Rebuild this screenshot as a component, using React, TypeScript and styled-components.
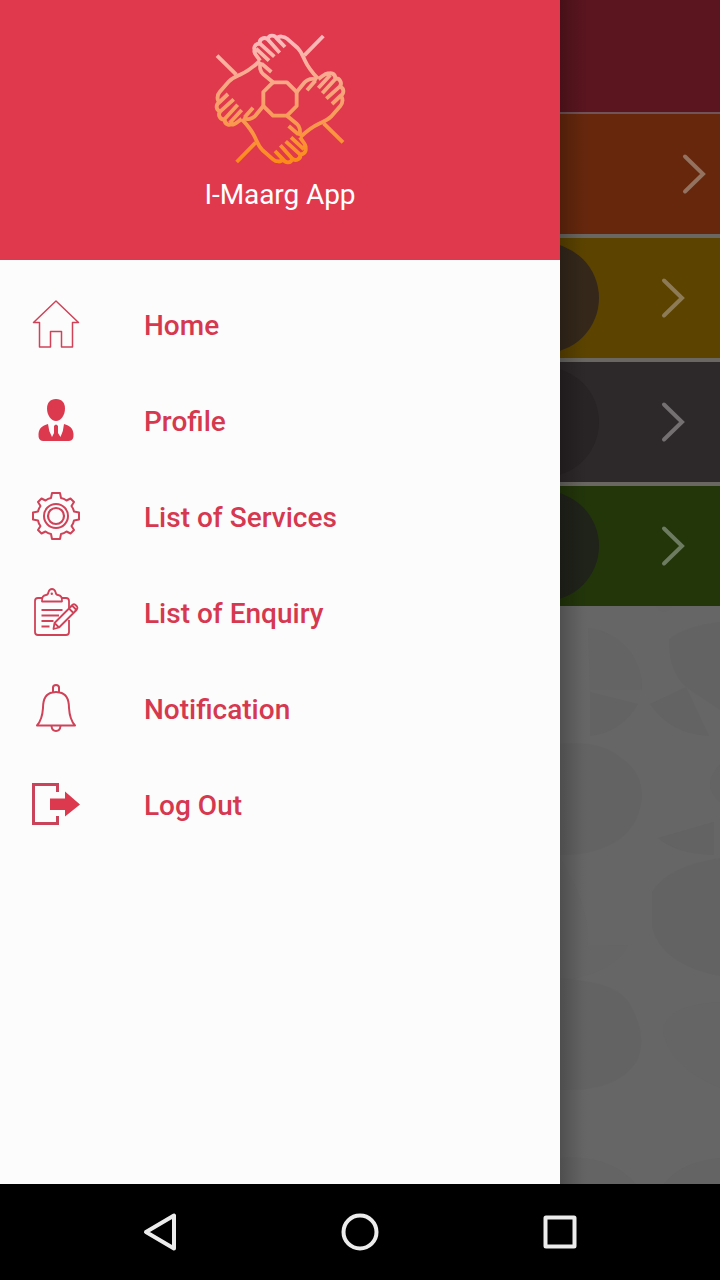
import React from "react";
import styled, { createGlobalStyle } from "styled-components";

const GlobalStyle = createGlobalStyle`
  * { box-sizing: border-box; }
  body { margin: 0; background: #000; font-family: Roboto, "Liberation Sans", sans-serif; }
`;

const Screen = styled.div`
  width: 720px;
  height: 1280px;
  display: flex;
  flex-direction: column;
  overflow: hidden;
`;

const Content = styled.div`
  height: 1184px;
  display: flex;
`;

const Drawer = styled.aside`
  width: 560px;
  background: #fcfcfc;
  display: flex;
  flex-direction: column;
`;

const DrawerHeader = styled.header`
  height: 260px;
  padding-top: 30px;
  background: #e0394e;
  display: flex;
  flex-direction: column;
  align-items: center;
`;

const AppName = styled.h1`
  margin: 7px 0 0;
  font-size: 28px;
  font-weight: 400;
  line-height: 40px;
  letter-spacing: -0.1px;
  color: #fff;
`;

const Menu = styled.nav`
  padding-top: 16px;
  display: flex;
  flex-direction: column;
`;

const MenuItem = styled.a`
  height: 96px;
  padding-left: 32px;
  display: flex;
  align-items: center;
  gap: 64px;
  color: #d6384f;
  font-size: 28px;
  font-weight: 500;
`;

const MenuIcon = styled.svg<{ $weight?: number }>`
  width: 48px;
  height: 48px;
  flex: none;
  overflow: visible;
  fill: none;
  stroke: #cf4258;
  stroke-width: ${(p) => p.$weight ?? 1.8};
  stroke-linejoin: round;
`;

const MenuLabel = styled.span`
  line-height: 36px;
  padding-top: 4px;
`;

const Behind = styled.main`
  position: relative;
  width: 160px;
  display: flex;
  flex-direction: column;
  background: #666;
  overflow: hidden;
`;

const DrawerShadow = styled.div`
  position: absolute;
  inset: 0 auto 0 0;
  width: 28px;
  background: linear-gradient(to right, rgba(0, 0, 0, 0.22), rgba(0, 0, 0, 0.1) 45%, rgba(0, 0, 0, 0.02) 80%, transparent);
`;

const TopBar = styled.div`
  height: 114px;
  flex: none;
  background: #5a151f;
  border-bottom: 2px solid #70545a;
`;

const Card = styled.div<{ $color: string; $last?: boolean; $inset: number }>`
  height: ${(p) => (p.$last ? 120 : 124)}px;
  flex: none;
  display: flex;
  align-items: center;
  justify-content: space-between;
  padding-right: ${(p) => p.$inset}px;
  background: ${(p) => p.$color};
  border-bottom: ${(p) => (p.$last ? "none" : "4px solid #6a6762")};
`;

const Disc = styled.div<{ $color: string }>`
  width: 110px;
  height: 110px;
  margin-left: -71px;
  border-radius: 50%;
  background: ${(p) => p.$color};
`;

const Arrow = styled.svg<{ $color: string }>`
  width: 24px;
  height: 42px;
  fill: none;
  stroke: ${(p) => p.$color};
  stroke-width: 4;
  stroke-linecap: round;
`;

const Pattern = styled.svg`
  width: 160px;
  height: 578px;
  display: block;
  fill: #636363;
`;

const NavBar = styled.footer`
  height: 96px;
  background: #000;
  display: flex;
  justify-content: center;
  gap: 152px;
  align-items: center;
`;

const NavIcon = styled.svg`
  width: 48px;
  height: 48px;
  fill: none;
  stroke: #ececec;
  stroke-width: 4;
  stroke-linejoin: round;
`;

const turns = [0, 90, 180, 270];

const HandsLogo = () => (
  <svg width="138" height="138" viewBox="33 30 414 414" fill="none">
    <defs>
      <linearGradient id="warm" gradientUnits="userSpaceOnUse" x1="240" y1="45" x2="240" y2="430">
        <stop offset="0" stopColor="#fbbcc0" />
        <stop offset="0.45" stopColor="#f8a47a" />
        <stop offset="1" stopColor="#fb8a17" />
      </linearGradient>
      <mask id="hands" maskUnits="userSpaceOnUse" x="30" y="30" width="420" height="420">
        <g stroke="#fff" strokeWidth="11.5" strokeLinecap="butt" strokeLinejoin="round">
          {turns.map((a) => (
            <g key={a} transform={`rotate(${a} 240 237)`}>
              <path d="M370 48 L313 106" />
              <path d="M231 56 C236 47 252 48 261 56 L293 84 C304 95 308 107 314 120 C323 140 337 158 354 176" />
              <path d="M255 81 L231 56 C224 44 207 43 203 58" />
              <path d="M239 98 L203 58 C194 49 174 57 180 74" />
              <path d="M223 110 L180 71 C163 70 158 86 168 99" />
              <path d="M207 122 L168 86 M163 92 C162 102 173 110 180 122" />
              <path d="M183 126 C176 140 181 155 190 163 L219 187 M185 131 L214 156" />
              <path d="M215 187 L261 187 L292 218" />
            </g>
          ))}
        </g>
      </mask>
    </defs>
    <rect x="33" y="30" width="414" height="414" fill="url(#warm)" mask="url(#hands)" />
  </svg>
);

const HomeIcon = () => (
  <MenuIcon viewBox="0 0 48 48" $weight={1.5}>
    <path d="M24 1 L1.500 22.500 H7.500 V47 H18.500 V31.500 H29.500 V47 H40.500 V22.500 H46.500 Z" />
  </MenuIcon>
);

const ProfileIcon = () => (
  <MenuIcon viewBox="0 0 48 48">
    <g fill="#dc394f" stroke="none">
      <path d="M24 3 C30 3 33 7 33 12.500 C33 19 29 25 24 25 C19 25 15 19 15 12.500 C15 7 18 3 24 3 Z" />
      <path d="M16 28 Q16.500 35 20 41 L22 37 L22 30 Q24 27 26 30 L26 37 L28.500 41 Q31.500 35 32 28 C38 30 41 32 41.500 38 Q42 45 37 45 H11 Q6 45 6.500 38 C7 32 10 30 16 28 Z" />
    </g>
  </MenuIcon>
);

const GearIcon = () => (
  <MenuIcon viewBox="0 0 48 48" $weight={2}>
    <path d="M20 1 H28 L29 6 Q32 6.500 34.500 8.500 L38.500 6.500 L42 10 L39.500 14 Q41.500 17 42 19.500 L47 20.500 V27.500 L42 28.500 Q41.500 31.500 39.500 34 L42 38 L38.500 41.500 L34.500 39.500 Q32 41.500 29 42 L28 47 H20 L19 42 Q16 41.500 13.500 39.500 L9.500 41.500 L6 38 L8.500 34 Q6.500 31.500 6 28.500 L1 27.500 V20.500 L6 19.500 Q6.500 17 8.500 14 L6 10 L9.500 6.500 L13.500 8.500 Q16 6.500 19 6 Z" />
    <circle cx="24" cy="24" r="12" />
    <circle cx="24" cy="24" r="8" strokeWidth="2.200" />
  </MenuIcon>
);

const EnquiryIcon = () => (
  <MenuIcon viewBox="0 0 48 48">
    <path d="M10 10 H6 Q3 10 3 13 V44 Q3 47 6 47 H34 Q37 47 37 44 V32 M37 20 V13 Q37 10 34 10 H30" />
    <path d="M10 13.500 Q9.500 7.500 14 7 Q16 7 16.500 4 Q17.500 1 20 1 Q22.500 1 23.500 4 Q24 7 26 7 Q30.500 7.500 30 13.500 Z" />
    <circle cx="19.800" cy="5.800" r="1.200" fill="#cf4258" stroke="none" />
    <path d="M9.500 22 H30.500 M9.500 27.500 H27 M9.500 33 H21.500 M9.500 38.500 H17.500" />
    <path d="M40 17.500 L44.500 22 L27 39.500 L21.500 41 L22.500 35 Z M37 20.500 L41.500 25 M22.500 35 L27 39.500" />
    <path d="M39 18.500 L41 16.500 Q42 15.500 43.500 17 L45 18.500 Q46 20 45 21 L43 23" />
  </MenuIcon>
);

const BellIcon = () => (
  <MenuIcon viewBox="0 0 48 48" $weight={2}>
    <path d="M5 41.500 C9 37 10.500 32 11 24 C11 15 14 9.500 20.500 8.500 Q24 7.500 27.500 8.500 C34 9.500 37 15 37 24 C37.500 32 39 37 43 41.500 Z" />
    <path d="M21 8.500 V3.500 Q21 1 24 1 Q27 1 27 3.500 V8.500 M19.500 42 Q20 47 24 47 Q28 47 28.500 42" />
  </MenuIcon>
);

const LogoutIcon = () => (
  <MenuIcon viewBox="0 0 48 48">
    <path d="M0 3 H27 V12 H24 V6 H3 V42 H24 V36 H27 V45 H0 Z" fill="#c9435a" stroke="none" />
    <path d="M18 18.500 H33 V11.500 L48 24.500 L33 36.500 V30 H18 Z" fill="#dc394f" stroke="none" />
  </MenuIcon>
);

const entries = [
  { label: "Home", Icon: HomeIcon },
  { label: "Profile", Icon: ProfileIcon },
  { label: "List of Services", Icon: GearIcon },
  { label: "List of Enquiry", Icon: EnquiryIcon },
  { label: "Notification", Icon: BellIcon },
  { label: "Log Out", Icon: LogoutIcon },
];

const cards = [
  { color: "#66270d", disc: "transparent", arrow: "#93725f", inset: 14 },
  { color: "#5c4300", disc: "#35281b", arrow: "#8d7b57", inset: 35 },
  { color: "#2d282a", disc: "#282325", arrow: "#747071", inset: 35 },
  { color: "#22360a", disc: "#20231a", arrow: "#6d7b60", inset: 35 },
];

export default function App() {
  return (
    <>
      <GlobalStyle />
      <Screen>
        <Content>
          <Drawer>
            <DrawerHeader>
              <HandsLogo />
              <AppName>I-Maarg App</AppName>
            </DrawerHeader>
            <Menu>
              {entries.map(({ label, Icon }) => (
                <MenuItem key={label}>
                  <Icon />
                  <MenuLabel>{label}</MenuLabel>
                </MenuItem>
              ))}
            </Menu>
          </Drawer>
          <Behind>
            <TopBar />
            {cards.map((c, i) => (
              <Card key={c.color} $color={c.color} $inset={c.inset} $last={i === cards.length - 1}>
                <Disc $color={c.disc} />
                <Arrow $color={c.arrow} viewBox="0 0 24 42">
                  <path d="M3 3.500 L21 21 L3 38.500" />
                </Arrow>
              </Card>
            ))}
            <Pattern viewBox="0 0 160 578">
              <path d="M40 0 H112 Q104 12 96 0 Z" opacity="0.5" />
              <path d="M28 22 A60 60 0 0 1 82 84 L30 84 Z" opacity="0.55" />
              <path d="M30 86 L78 98 Q62 126 30 130 Z" />
              <path d="M160 16 Q126 20 109 33 Q108 66 127 82 L160 104 Z" opacity="0.75" />
              <path d="M90 98 L126 81 L149 130 Q110 128 90 98 Z" />
              <path d="M0 138 Q40 134 60 151 Q82 165 82 190 Q80 218 60 233 Q35 250 0 249 Z" opacity="0.75" />
              <path d="M160 158 Q140 180 160 196 Z" opacity="0.6" />
              <path d="M98 232 L154 216 V249 Q116 248 98 232 Z" />
              <path d="M160 252 Q108 260 92 286 V320 Q100 358 160 370 Z" opacity="0.85" />
              <path d="M0 252 Q30 300 28 340 L68 339 Q58 365 0 376 Z" opacity="0.5" />
              <path d="M0 372 Q58 376 70 398 Q88 430 77 455 Q58 486 0 484 Z" opacity="0.75" />
              <path d="M160 396 Q98 400 104 430 Q112 462 160 482 Z" opacity="0.5" />
              <path d="M0 552 Q50 548 76 578 H0 Z M104 578 Q120 556 160 552 V578 Z" opacity="0.6" />
            </Pattern>
            <DrawerShadow />
          </Behind>
        </Content>
        <NavBar>
          <NavIcon viewBox="0 0 48 48">
            <path d="M38 7.500 V40.500 L10 24 Z" />
          </NavIcon>
          <NavIcon viewBox="0 0 48 48">
            <circle cx="24" cy="24" r="16.500" />
          </NavIcon>
          <NavIcon viewBox="0 0 48 48">
            <rect x="9.500" y="9.500" width="29" height="29" rx="0.500" />
          </NavIcon>
        </NavBar>
      </Screen>
    </>
  );
}
